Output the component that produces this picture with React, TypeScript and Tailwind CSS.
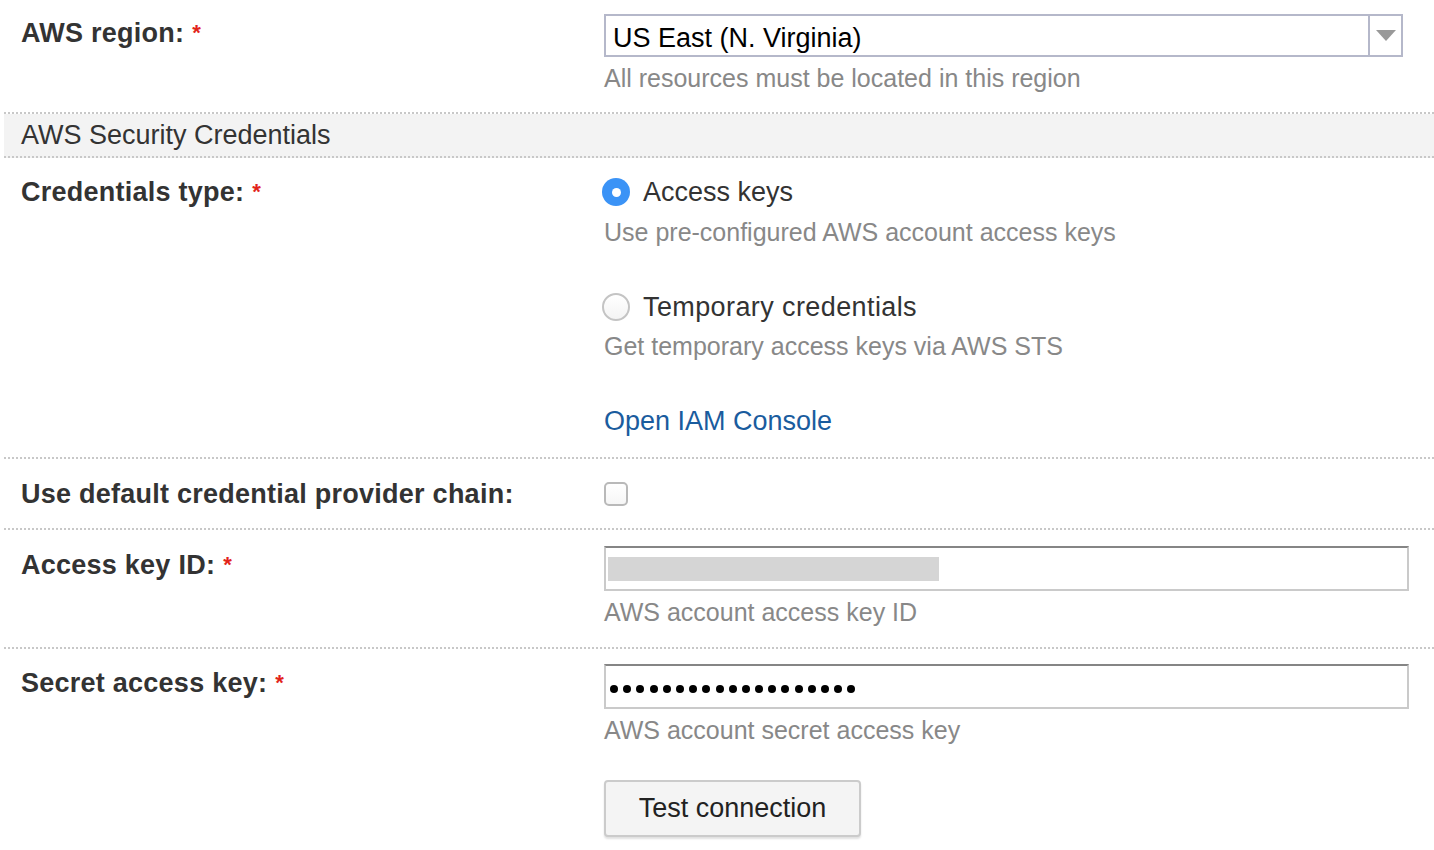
import React from "react";

const FONT = { fontFamily: '"Liberation Sans", Arial, Helvetica, sans-serif' };

function Label({ text, required }: { text: string; required?: boolean }) {
  return (
    <div className="text-[27px] leading-[32px] font-bold text-[#333333] whitespace-nowrap tracking-[0.25px]">
      {text}
      {required && <span className="ml-[8px] text-[22px] text-[#e2231a] font-bold align-top">*</span>}
    </div>
  );
}

function Help({ children, className = "" }: { children: React.ReactNode; className?: string }) {
  return <div className={"text-[25px] leading-[30px] text-[#888888] whitespace-nowrap " + className}>{children}</div>;
}

function Radio({ checked }: { checked?: boolean }) {
  if (checked) {
    return (
      <div className="w-[28px] h-[28px] rounded-full bg-[#3b93f6] flex items-center justify-center shrink-0">
        <div className="w-[9px] h-[9px] rounded-full bg-white" />
      </div>
    );
  }
  return (
    <div className="w-[28px] h-[28px] rounded-full border-2 border-[#c4c4c4] bg-gradient-to-b from-white to-[#f4f4f4] shrink-0" />
  );
}

export default function App() {
  return (
    <div className="w-[1434px] h-[850px] bg-white overflow-hidden pl-[4px]" style={FONT}>
      {/* Row 1: AWS region */}
      <div className="flex border-b-2 border-dotted border-[#c8c8c8]">
        <div className="w-[600px] pl-[17px] pt-[17px]">
          <Label text="AWS region:" required />
        </div>
        <div className="flex-1 pt-[14px] pb-[19px]">
          <div className="w-[799px] h-[43px] border-2 border-[#b5b8ca] flex">
            <div className="flex-1 pl-[7px] pt-[6px] flex items-center text-[27px] text-black leading-none">US East (N. Virginia)</div>
            <div className="w-[33px] border-l-2 border-[#b5b8ca] flex items-center justify-center">
              <svg width="20" height="11" viewBox="0 0 20 11">
                <polygon points="0,0 20,0 10,11" fill="#999999" />
              </svg>
            </div>
          </div>
          <Help className="mt-[6px]">All resources must be located in this region</Help>
        </div>
      </div>

      {/* Section header */}
      <div className="h-[42px] bg-[#f3f3f3] border-b-2 border-dotted border-[#c8c8c8] box-content flex items-center pl-[17px] text-[27px] text-[#333333]">
        AWS Security Credentials
      </div>

      {/* Row 2: Credentials type */}
      <div className="flex border-b-2 border-dotted border-[#c8c8c8]">
        <div className="w-[600px] pl-[17px] pt-[18px]">
          <Label text="Credentials type:" required />
        </div>
        <div className="flex-1 pt-[17px] pb-[19px]">
          <div className="flex items-center gap-[13px] -ml-[2px] h-[34px]">
            <Radio checked />
            <span className="text-[27px] leading-[34px] text-[#333333]">Access keys</span>
          </div>
          <Help className="mt-[8px]">Use pre-configured AWS account access keys</Help>
          <div className="flex items-center gap-[13px] -ml-[2px] h-[34px] mt-[43px]">
            <Radio />
            <span className="text-[27px] leading-[34px] text-[#333333] tracking-[0.4px]">Temporary credentials</span>
          </div>
          <Help className="mt-[7px]">Get temporary access keys via AWS STS</Help>
          <div className="mt-[43px] text-[27px] leading-[34px] text-[#1a5c9e]">Open IAM Console</div>
        </div>
      </div>

      {/* Row 3: default provider chain */}
      <div className="flex items-center h-[69px] border-b-2 border-dotted border-[#c8c8c8] box-content">
        <div className="w-[600px] pl-[17px]">
          <Label text="Use default credential provider chain:" />
        </div>
        <div className="flex-1">
          <div className="w-[24px] h-[24px] rounded-[5px] border-2 border-[#b9b9b9] bg-gradient-to-b from-white to-[#f6f6f6]" />
        </div>
      </div>

      {/* Row 4: Access key ID */}
      <div className="flex border-b-2 border-dotted border-[#c8c8c8]">
        <div className="w-[600px] pl-[17px] pt-[19px]">
          <Label text="Access key ID:" required />
        </div>
        <div className="flex-1 pt-[16px] pb-[20px]">
          <div className="w-[805px] h-[45px] border-2 border-[#cacaca] border-t-[#858585] pl-[2px] pt-[9px]">
            <div className="w-[331px] h-[24px] bg-[#d5d5d5]" />
          </div>
          <Help className="mt-[6px]">AWS account access key ID</Help>
        </div>
      </div>

      {/* Row 5: Secret access key */}
      <div className="flex">
        <div className="w-[600px] pl-[17px] pt-[18px]">
          <Label text="Secret access key:" required />
        </div>
        <div className="flex-1 pt-[15px]">
          <div className="w-[805px] h-[45px] border-2 border-[#cacaca] border-t-[#858585] pl-[4px] flex items-center">
            <div className="flex gap-[5.2px] mt-[4px]">
              {Array.from({ length: 19 }).map((_, i) => (
                <div key={i} className="w-[8px] h-[8px] rounded-full bg-black" />
              ))}
            </div>
          </div>
          <Help className="mt-[6px]">AWS account secret access key</Help>
          <button className="mt-[35px] w-[257px] h-[57px] bg-[#f4f4f4] border-2 border-[#cbcbcb] rounded-[4px] shadow-[0_2px_2px_rgba(0,0,0,0.12)] text-[27px] text-[#222222] flex items-center justify-center">
            Test connection
          </button>
        </div>
      </div>
    </div>
  );
}
